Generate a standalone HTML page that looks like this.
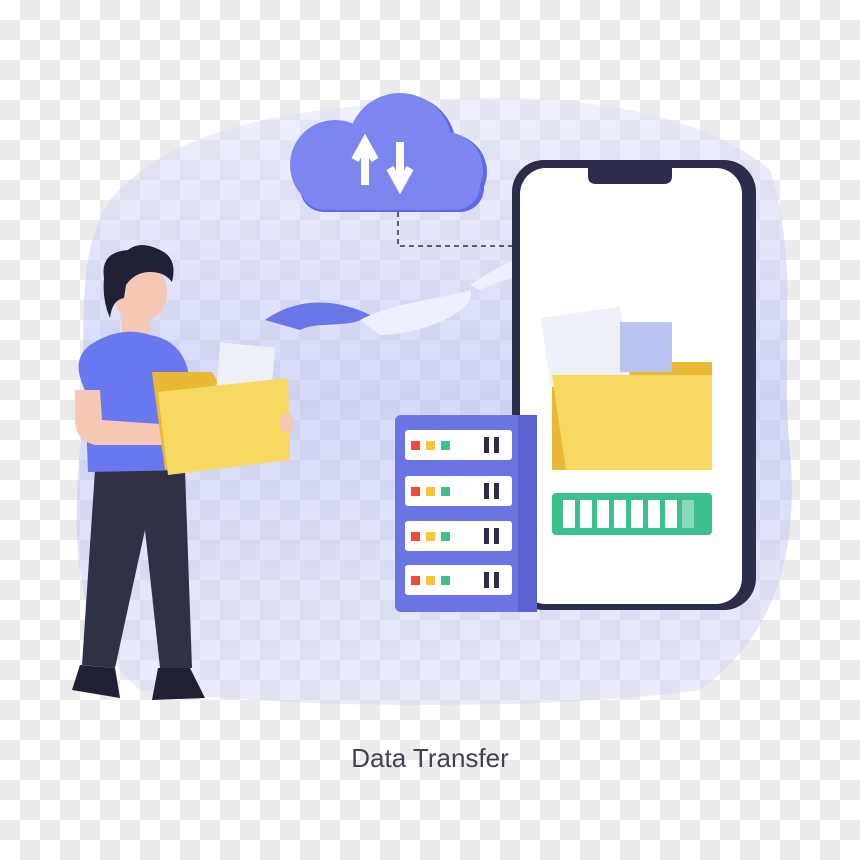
<!DOCTYPE html>
<html><head><style>
body{margin:0;width:860px;height:860px;overflow:hidden;
background-color:#fff;
background-image:linear-gradient(45deg,#ebebeb 25%,transparent 25%,transparent 75%,#ebebeb 75%),linear-gradient(45deg,#ebebeb 25%,transparent 25%,transparent 75%,#ebebeb 75%);
background-size:40px 40px;background-position:0 0,20px 20px;}
svg{position:absolute;left:0;top:0}
</style></head><body>
<svg width="860" height="860" viewBox="0 0 860 860">
<defs><linearGradient id="bg" x1="0" y1="0" x2="0" y2="1"><stop offset="0" stop-color="#dfe2fa" stop-opacity=".5"/><stop offset=".5" stop-color="#b9bff3" stop-opacity=".6"/><stop offset="1" stop-color="#d3d7f7" stop-opacity=".45"/></linearGradient></defs>
<path d="M110 200 C180 120 300 110 430 100 C560 90 700 110 770 170 C800 260 780 360 790 450 C800 560 770 640 700 690 C560 710 300 710 140 690 C80 640 70 560 80 450 C90 350 70 260 110 200Z" fill="url(#bg)"/>
<!-- cloud -->
<g fill="#5f69e6">
<circle cx="404" cy="147" r="52"/><circle cx="449" cy="172" r="38"/><rect x="300" y="164" width="184" height="48" rx="24"/>
</g>
<g fill="#7c86f1">
<circle cx="400" cy="145" r="52"/><circle cx="335" cy="165" r="45"/><circle cx="445" cy="170" r="38"/>
<rect x="300" y="160" width="180" height="50" rx="25"/>
</g>
<path d="M365 185 V150 M355 160 L365 142 L375 160" stroke="#fff" stroke-width="8" fill="none"/>
<path d="M400 142 V178 M390 168 L400 186 L410 168" stroke="#fff" stroke-width="8" fill="none"/>
<path d="M398 212 V246 H512" stroke="#333" stroke-width="1.5" stroke-dasharray="5 4" fill="none"/>
<!-- paper flying -->
<path d="M265 320 C300 295 340 300 370 315 C350 330 320 320 300 330Z" fill="#6a75e8"/>
<path d="M360 320 C400 300 440 300 470 290 C480 310 420 335 380 335Z" fill="#eef0ff"/>
<path d="M470 285 C520 250 560 245 600 260 C560 270 520 270 480 290Z" fill="#eef0ff"/>
<!-- phone -->
<rect x="512" y="160" width="244" height="450" rx="32" fill="#2b2d4a"/>
<rect x="520" y="168" width="222" height="436" rx="26" fill="#fff"/>
<path d="M588 168 H672 V176 Q672 184 664 184 H596 Q588 184 588 176Z" fill="#2b2d4a"/>
<path d="M552 350 L600 350 L610 362 L712 362 L712 470 L552 470Z" fill="#e9b936"/>
<rect x="545" y="312" width="80" height="70" fill="#eef1f8" transform="rotate(-8 585 345)"/>
<rect x="620" y="322" width="52" height="50" fill="#b9c5f0"/>
<path d="M552 375 L712 375 L712 470 L566 470Z" fill="#f7d962"/>
<rect x="552" y="493" width="160" height="42" rx="4" fill="#3dbf8e"/>
<g fill="#fff"><rect x="563" y="500" width="12" height="28"/><rect x="580" y="500" width="12" height="28"/><rect x="597" y="500" width="12" height="28"/><rect x="614" y="500" width="12" height="28"/><rect x="631" y="500" width="12" height="28"/><rect x="648" y="500" width="12" height="28"/><rect x="665" y="500" width="12" height="28"/><rect x="682" y="500" width="12" height="28" opacity=".4"/></g>
<!-- server -->
<rect x="395" y="415" width="142" height="197" rx="6" fill="#6b74e3"/>
<rect x="518" y="415" width="19" height="197" fill="#5a62cf"/>
<g>
<rect x="405" y="430" width="107" height="30" rx="3" fill="#fff"/>
<rect x="405" y="476" width="107" height="30" rx="3" fill="#fff"/>
<rect x="405" y="521" width="107" height="30" rx="3" fill="#fff"/>
<rect x="405" y="565" width="107" height="30" rx="3" fill="#fff"/>
</g>
<g>
<g><rect x="411" y="441" width="9" height="9" fill="#ef4a3c"/><rect x="426" y="441" width="9" height="9" fill="#f5c53a"/><rect x="441" y="441" width="9" height="9" fill="#3dbf8e"/><rect x="484" y="437" width="5" height="16" fill="#2b2d4a"/><rect x="494" y="437" width="5" height="16" fill="#2b2d4a"/></g>
<g transform="translate(0,46)"><rect x="411" y="441" width="9" height="9" fill="#ef4a3c"/><rect x="426" y="441" width="9" height="9" fill="#f5c53a"/><rect x="441" y="441" width="9" height="9" fill="#3dbf8e"/><rect x="484" y="437" width="5" height="16" fill="#2b2d4a"/><rect x="494" y="437" width="5" height="16" fill="#2b2d4a"/></g>
<g transform="translate(0,91)"><rect x="411" y="441" width="9" height="9" fill="#ef4a3c"/><rect x="426" y="441" width="9" height="9" fill="#f5c53a"/><rect x="441" y="441" width="9" height="9" fill="#3dbf8e"/><rect x="484" y="437" width="5" height="16" fill="#2b2d4a"/><rect x="494" y="437" width="5" height="16" fill="#2b2d4a"/></g>
<g transform="translate(0,135)"><rect x="411" y="441" width="9" height="9" fill="#ef4a3c"/><rect x="426" y="441" width="9" height="9" fill="#f5c53a"/><rect x="441" y="441" width="9" height="9" fill="#3dbf8e"/><rect x="484" y="437" width="5" height="16" fill="#2b2d4a"/><rect x="494" y="437" width="5" height="16" fill="#2b2d4a"/></g>
</g>
<!-- person -->
<path d="M95 470 L185 470 L192 668 L160 668 L145 530 L115 668 L82 665Z" fill="#2f3245"/>
<path d="M80 665 L115 668 L120 698 L72 690Z" fill="#1f2033"/>
<path d="M158 668 L190 668 L205 698 L152 700Z" fill="#1f2033"/>
<rect x="122" y="305" width="28" height="35" fill="#f5c7b5"/>
<path d="M90 345 Q120 325 150 335 Q180 340 188 370 L190 470 L88 472 L85 390 Q70 360 90 345Z" fill="#6a78f0"/>
<path d="M75 390 L100 390 L102 420 L175 425 L180 445 L95 445 Q75 440 75 420Z" fill="#f5c7b5"/>
<ellipse cx="140" cy="292" rx="27" ry="30" fill="#f5c7b5"/>
<path d="M104 278 Q100 252 128 250 Q140 240 160 250 Q178 258 172 282 Q165 272 150 272 Q135 272 126 285 L124 298 Q112 300 110 318 Q102 300 104 278Z" fill="#1f2033"/>
<path d="M152 372 L212 372 L218 382 L285 382 L288 460 L165 470Z" fill="#e9b936"/>
<rect x="218" y="345" width="55" height="48" fill="#eef1f8" transform="rotate(5 245 370)"/>
<path d="M158 392 L288 378 L290 460 L168 475Z" fill="#f7d962"/>
<ellipse cx="287" cy="423" rx="7" ry="10" fill="#f5c7b5"/>
<text x="430" y="767" text-anchor="middle" font-family="Liberation Sans, sans-serif" font-size="26" fill="#3f4250">Data Transfer</text>
</svg>
</body></html>
